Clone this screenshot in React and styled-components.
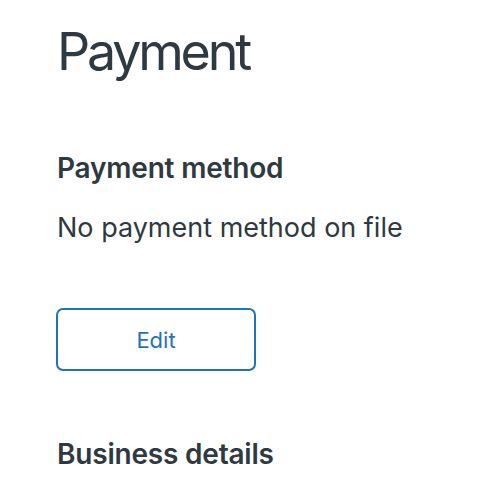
import styled, { createGlobalStyle } from 'styled-components';

const GlobalStyle = createGlobalStyle`
    body {
        margin: 0;
        background: #fff;
        font-family: Inter, "Noto Sans", "Liberation Sans", sans-serif;
        color: #2f3941;
    }
`;

const Page = styled.main`
    padding: 20px 57px;
    display: flex;
    flex-direction: column;
    align-items: flex-start;
`;

const Title = styled.h1`
    margin: 0;
    font-size: 52px;
    font-weight: 400;
    line-height: 64px;
    letter-spacing: -3.2px;
`;

const SectionTitle = styled.h2`
    margin: ${({ $top }) => $top}px 0 0;
    font-size: 28px;
    font-weight: 600;
    line-height: 36px;
    letter-spacing: -0.2px;
`;

const Text = styled.p`
    margin: 24px 0 0;
    font-size: 27px;
    line-height: 36px;
`;

const Button = styled.button`
    margin: 62px 0 0 -1px;
    width: 200px;
    height: 63px;
    border: 2px solid #1f73b7;
    border-radius: 7px;
    background: #fff;
    color: #1f73b7;
    font-family: inherit;
    font-size: 22px;
    cursor: pointer;
`;

const App = () => (
    <>
        <GlobalStyle />
        <Page>
            <Title>Payment</Title>
            <SectionTitle $top={66}>Payment method</SectionTitle>
            <Text>No payment method on file</Text>
            <Button>Edit</Button>
            <SectionTitle $top={65}>Business details</SectionTitle>
        </Page>
    </>
);

export default App;
